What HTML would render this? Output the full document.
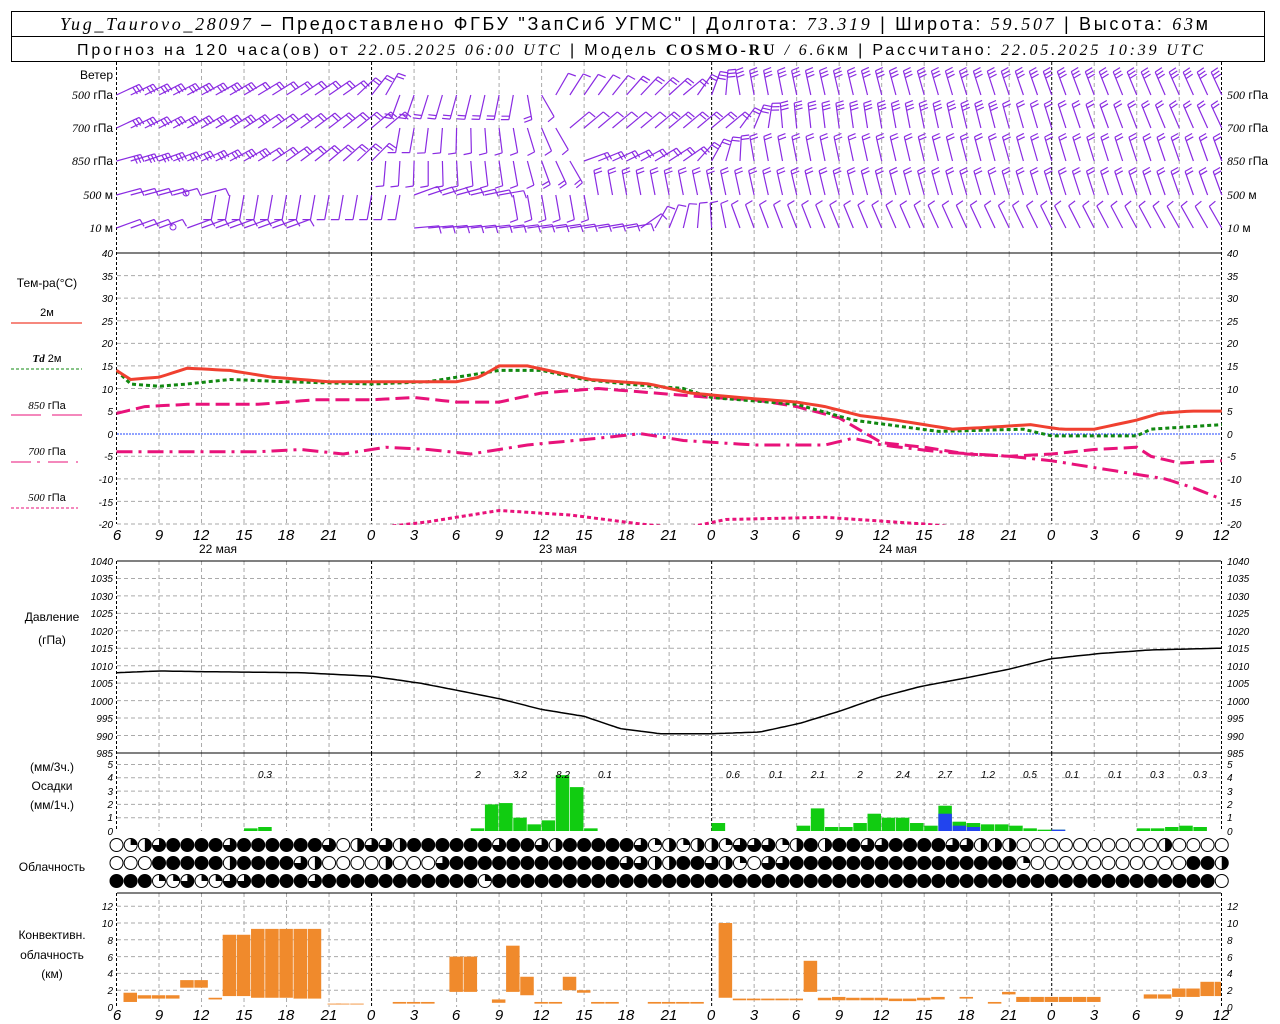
<!DOCTYPE html>
<html><head><meta charset="utf-8"><style>
html,body{margin:0;padding:0;background:#fff;width:1280px;height:1024px;overflow:hidden}
svg{display:block}
text{font-family:"Liberation Sans",sans-serif;fill:#000}
.it{font-family:"Liberation Serif",serif;font-style:italic}
.ax{font-family:"Liberation Sans",sans-serif;font-style:italic;font-size:10px}
.lb{font-size:12px}
.xl{font-family:"Liberation Sans",sans-serif;font-style:italic;font-size:15px}
</style></head><body>
<svg id="s" width="1280" height="1024" viewBox="0 0 1280 1024" xmlns="http://www.w3.org/2000/svg">
<defs><clipPath id="tc"><rect x="116" y="253" width="1106" height="272"/></clipPath></defs>
<rect x="11.5" y="11.5" width="1253" height="50" fill="none" stroke="#000"/>
<line x1="11" y1="36.5" x2="1265" y2="36.5" stroke="#000"/>
<text x="60" y="30" font-size="18" textLength="1148" lengthAdjust="spacing"><tspan class="it">Yug_Taurovo_28097</tspan> – Предоставлено ФГБУ "ЗапСиб УГМС" | Долгота: <tspan class="it">73.319</tspan> | Широта: <tspan class="it">59.507</tspan> | Высота: <tspan class="it">63</tspan>м</text>
<text x="77" y="55" font-size="16" textLength="1126" lengthAdjust="spacing">Прогноз на 120 часа(ов) от <tspan class="it">22.05.2025 06:00 UTC</tspan>  | Модель <tspan font-family="Liberation Serif" font-weight="bold">COSMO-RU</tspan> <tspan class="it">/ 6.6</tspan>км | Рассчитано: <tspan class="it">22.05.2025 10:39 UTC</tspan></text>
<g id="g"></g>
<g class="lb" text-anchor="end" font-size="11">
<text x="113" y="79">Ветер</text>
<text x="113" y="99"><tspan class="it">500</tspan> гПа</text>
<text x="113" y="132"><tspan class="it">700</tspan> гПа</text>
<text x="113" y="165"><tspan class="it">850</tspan> гПа</text>
<text x="113" y="199"><tspan class="it">500</tspan> м</text>
<text x="113" y="232"><tspan class="it">10</tspan> м</text>
</g>
<g class="lb" font-size="11">
<text x="1227" y="99"><tspan class="it">500</tspan> гПа</text>
<text x="1227" y="132"><tspan class="it">700</tspan> гПа</text>
<text x="1227" y="165"><tspan class="it">850</tspan> гПа</text>
<text x="1227" y="199"><tspan class="it">500</tspan> м</text>
<text x="1227" y="232"><tspan class="it">10</tspan> м</text>
</g>
<g text-anchor="middle" font-size="12">
<text x="47" y="287">Тем-ра(°С)</text>
<text x="47" y="316" font-size="11">2м</text>
<text x="47" y="362" font-size="11"><tspan class="it" font-weight="bold">Td</tspan>  2м</text>
<text x="47" y="409" font-size="11"><tspan class="it">850</tspan> гПа</text>
<text x="47" y="455" font-size="11"><tspan class="it">700</tspan> гПа</text>
<text x="47" y="501" font-size="11"><tspan class="it">500</tspan> гПа</text>
<text x="52" y="621">Давление</text>
<text x="52" y="644">(гПа)</text>
<text x="52" y="771">(мм/3ч.)</text>
<text x="52" y="790">Осадки</text>
<text x="52" y="809">(мм/1ч.)</text>
<text x="52" y="871">Облачность</text>
<text x="52" y="939">Конвективн.</text>
<text x="52" y="959">облачность</text>
<text x="52" y="978">(км)</text>
</g>
<line x1="11" y1="323" x2="82" y2="323" stroke="#f04030" stroke-width="1.2"/>
<line x1="11" y1="369" x2="82" y2="369" stroke="#118811" stroke-dasharray="3,2"/>
<line x1="11" y1="415" x2="41" y2="415" stroke="#e8127a"/><line x1="52" y1="415" x2="82" y2="415" stroke="#e8127a"/>
<path d="M11 462h20M37 462h3M48 462h20M76 462h2" stroke="#e8127a"/>
<line x1="11" y1="508" x2="78" y2="508" stroke="#e8127a" stroke-dasharray="3,2"/>
<g class="ax" text-anchor="end">
<text x="113" y="257">40</text><text x="113" y="302">30</text><text x="113" y="280">35</text><text x="113" y="325">25</text><text x="113" y="347">20</text><text x="113" y="370">15</text><text x="113" y="393">10</text><text x="113" y="415">5</text><text x="113" y="438">0</text><text x="113" y="460">-5</text><text x="113" y="483">-10</text><text x="113" y="506">-15</text><text x="113" y="528">-20</text>
<text x="113" y="565">1040</text><text x="113" y="582">1035</text><text x="113" y="600">1030</text><text x="113" y="617">1025</text><text x="113" y="635">1020</text><text x="113" y="652">1015</text><text x="113" y="670">1010</text><text x="113" y="687">1005</text><text x="113" y="705">1000</text><text x="113" y="722">995</text><text x="113" y="740">990</text><text x="113" y="757">985</text>
<text x="113" y="768">5</text><text x="113" y="781">4</text><text x="113" y="795">3</text><text x="113" y="808">2</text><text x="113" y="821">1</text><text x="113" y="835">0</text>
<text x="113" y="910">12</text><text x="113" y="927">10</text><text x="113" y="944">8</text><text x="113" y="961">6</text><text x="113" y="977">4</text><text x="113" y="994">2</text><text x="113" y="1011">0</text>
</g>
<g class="ax">
<text x="1227" y="257">40</text><text x="1227" y="280">35</text><text x="1227" y="302">30</text><text x="1227" y="325">25</text><text x="1227" y="347">20</text><text x="1227" y="370">15</text><text x="1227" y="393">10</text><text x="1227" y="415">5</text><text x="1227" y="438">0</text><text x="1227" y="460">-5</text><text x="1227" y="483">-10</text><text x="1227" y="506">-15</text><text x="1227" y="528">-20</text>
<text x="1227" y="565">1040</text><text x="1227" y="582">1035</text><text x="1227" y="600">1030</text><text x="1227" y="617">1025</text><text x="1227" y="635">1020</text><text x="1227" y="652">1015</text><text x="1227" y="670">1010</text><text x="1227" y="687">1005</text><text x="1227" y="705">1000</text><text x="1227" y="722">995</text><text x="1227" y="740">990</text><text x="1227" y="757">985</text>
<text x="1227" y="768">5</text><text x="1227" y="781">4</text><text x="1227" y="795">3</text><text x="1227" y="808">2</text><text x="1227" y="821">1</text><text x="1227" y="835">0</text>
<text x="1227" y="910">12</text><text x="1227" y="927">10</text><text x="1227" y="944">8</text><text x="1227" y="961">6</text><text x="1227" y="977">4</text><text x="1227" y="994">2</text><text x="1227" y="1011">0</text>
</g>
<g class="xl" text-anchor="middle">
<text x="117" y="540">6</text><text x="159" y="540">9</text><text x="201" y="540">12</text><text x="244" y="540">15</text><text x="286" y="540">18</text><text x="329" y="540">21</text><text x="371" y="540">0</text><text x="414" y="540">3</text><text x="456" y="540">6</text><text x="499" y="540">9</text><text x="541" y="540">12</text><text x="584" y="540">15</text><text x="626" y="540">18</text><text x="669" y="540">21</text><text x="711" y="540">0</text><text x="754" y="540">3</text><text x="796" y="540">6</text><text x="839" y="540">9</text><text x="881" y="540">12</text><text x="924" y="540">15</text><text x="966" y="540">18</text><text x="1009" y="540">21</text><text x="1051" y="540">0</text><text x="1094" y="540">3</text><text x="1136" y="540">6</text><text x="1179" y="540">9</text><text x="1221" y="540">12</text>
<text x="117" y="1020">6</text><text x="159" y="1020">9</text><text x="201" y="1020">12</text><text x="244" y="1020">15</text><text x="286" y="1020">18</text><text x="329" y="1020">21</text><text x="371" y="1020">0</text><text x="414" y="1020">3</text><text x="456" y="1020">6</text><text x="499" y="1020">9</text><text x="541" y="1020">12</text><text x="584" y="1020">15</text><text x="626" y="1020">18</text><text x="669" y="1020">21</text><text x="711" y="1020">0</text><text x="754" y="1020">3</text><text x="796" y="1020">6</text><text x="839" y="1020">9</text><text x="881" y="1020">12</text><text x="924" y="1020">15</text><text x="966" y="1020">18</text><text x="1009" y="1020">21</text><text x="1051" y="1020">0</text><text x="1094" y="1020">3</text><text x="1136" y="1020">6</text><text x="1179" y="1020">9</text><text x="1221" y="1020">12</text>
</g>
<g font-size="12" text-anchor="middle"><text x="218" y="553">22 мая</text><text x="558" y="553">23 мая</text><text x="898" y="553">24 мая</text></g>
<g class="ax" font-size="13" text-anchor="middle">
<text x="265" y="778">0.3</text><text x="478" y="778">2</text><text x="520" y="778">3.2</text><text x="563" y="778">8.2</text><text x="605" y="778">0.1</text><text x="733" y="778">0.6</text><text x="776" y="778">0.1</text><text x="818" y="778">2.1</text><text x="860" y="778">2</text><text x="903" y="778">2.4</text><text x="945" y="778">2.7</text><text x="988" y="778">1.2</text><text x="1030" y="778">0.5</text><text x="1072" y="778">0.1</text><text x="1115" y="778">0.1</text><text x="1157" y="778">0.3</text><text x="1200" y="778">0.3</text>
</g>
</svg>
<script>
var NS="http://www.w3.org/2000/svg",G=document.getElementById("g");
function el(t,a,p){var e=document.createElementNS(NS,t);for(var k in a)e.setAttribute(k,a[k]);(p||G).appendChild(e);return e;}
function X(h){return 116.5+h*14.17;}
function interp(kf,h){for(var i=0;i<kf.length-1;i++){if(h<=kf[i+1][0]){var a=kf[i],b=kf[i+1],f=(h-a[0])/(b[0]-a[0]);return a[1]+(b[1]-a[1])*f;}}return kf[kf.length-1][1];}
function ainterp(kf,h){for(var i=0;i<kf.length-1;i++){if(h<=kf[i+1][0]){var a=kf[i],b=kf[i+1],f=(h-a[0])/(b[0]-a[0]);if(Math.abs(b[1]-a[1])>90)return f<0.5?a[1]:b[1];return a[1]+(b[1]-a[1])*f;}}return kf[kf.length-1][1];}
function pts(kf,fy,step){var s="";for(var h=kf[0][0];h<=kf[kf.length-1][0]+0.001;h+=step||0.5){s+=X(h).toFixed(1)+","+fy(interp(kf,h)).toFixed(1)+" ";}return s;}
var gray={stroke:"#aaa","stroke-dasharray":"4,3","stroke-width":1};
var panels=[[62,253],[253,524],[561,753],[753,831],[893,1007]];
panels.forEach(function(p){for(var h=3;h<78;h+=3){var mid=(h==18||h==42||h==66);el("line",{x1:X(h),x2:X(h),y1:p[0],y2:p[1],stroke:mid?"#000":"#aaa","stroke-dasharray":mid?"3,2":"4,3"});}});
function hgrid(y){el("line",Object.assign({x1:117,x2:1221,y1:y,y2:y},gray));}
for(var t=35;t>=-20;t-=5)if(t!=0)hgrid(253+(40-t)*4.517);
for(var p=1035;p>=990;p-=5)hgrid(561+(1040-p)*3.49);
for(var m=1;m<=5;m++)hgrid(831-m*13.3);
for(var k=2;k<=12;k+=2)hgrid(1007-k*8.4);
el("line",{x1:117,x2:1221,y1:434,y2:434,stroke:"#2244ff","stroke-dasharray":"2,1"});
[253,561,753,893].forEach(function(y){el("line",{x1:117,x2:1221,y1:y,y2:y,stroke:"#000"});});
[[62,524],[561,831],[893,1007]].forEach(function(p){[116.5,1221.5].forEach(function(x){el("line",{x1:x,x2:x,y1:p[0],y2:p[1],stroke:"#000","stroke-dasharray":"3,2"});});});
var TY=function(t){return 253+(40-t)*4.517;};
var tg=el("g",{"clip-path":"url(#tc)",fill:"none"});
function curve(kf,st){var a={points:pts(kf,TY),fill:"none"};for(var k in st)a[k]=st[k];el("polyline",a,tg);}
curve([[0,-4],[10,-4],[13,-3.5],[16,-4.5],[19,-3],[22,-3.5],[25,-4.5],[29,-2.5],[34,-1],[37,0],[40,-1.5],[45,-2.5],[50,-2.5],[52,-1],[54,-2.5],[58,-4],[63,-5],[66,-6],[70,-8],[72,-9],[74,-10],[76,-12],[78,-14.5]],{stroke:"#e8127a","stroke-width":3,"stroke-dasharray":"16,6,3,6"});
curve([[0,4.5],[2,6],[5,6.5],[10,6.5],[14,7.5],[18,7.5],[21,8],[24,7],[27,7],[30,9],[34,10],[38,9],[42,8],[45,7.5],[48,6],[51,3.5],[54,-2],[57,-3],[60,-4.5],[63,-5],[66,-4.5],[69,-3.5],[72,-3],[73,-5],[75,-6.5],[78,-6]],{stroke:"#e8127a","stroke-width":3,"stroke-dasharray":"14,6"});
curve([[18,-21],[22,-19.5],[27,-17],[32,-18],[37,-20],[40,-21],[43,-19],[50,-18.5],[57,-20],[60,-21]],{stroke:"#e8127a","stroke-width":3,"stroke-dasharray":"4,3"});
curve([[0,14],[1,11],[3,10.5],[5,11],[8,12],[12,11.5],[18,11],[22,11.5],[25,13],[27,14],[30,14],[33,12],[36,11],[40,10],[42,8],[48,6.5],[52,3],[58,0.5],[64,1],[66,-0.5],[72,-0.5],[73,1],[78,2]],{stroke:"#118811","stroke-width":3,"stroke-dasharray":"4,3"});
curve([[0,14],[1,12],[3,12.5],[5,14.5],[8,14],[11,12.5],[15,11.5],[21,11.5],[24,11.5],[25.6,12.5],[27,15],[29,15],[33.4,12],[37.6,11],[40.5,9],[44,8],[48,7],[50,6],[52.5,4],[55,3],[59,1],[62,1.5],[64.5,2],[66.6,1],[69,1],[72,3],[73.6,4.5],[75.8,5],[78,5]],{stroke:"#f04030","stroke-width":3});
var pk=[[117,1008],[160,1008.5],[200,1008.3],[300,1008],[371,1007],[420,1005],[456,1003],[500,1000.5],[541,997.5],[584,995.5],[620,992],[660,990.5],[711,990.5],[760,991],[800,993.5],[840,997],[880,1001],[920,1004],[966,1006.5],[1009,1009],[1051,1012],[1100,1013.5],[1150,1014.5],[1221,1015]];
var ps="";for(var x=117;x<=1221;x+=4){ps+=x+","+(561+(1040-interp(pk,x))*3.49).toFixed(1)+" ";}
el("polyline",{points:ps,fill:"none",stroke:"#000","stroke-width":1.5});
var pr={9:.2,10:.3,25:.2,26:2,27:2.1,28:1,29:.5,30:.8,31:4.2,32:3.3,33:.2,42:.6,48:.4,49:1.7,50:.3,51:.3,52:.6,53:1.3,54:1,55:1,56:.6,57:.4,58:1.9,59:.7,60:.6,61:.5,62:.5,63:.4,64:.2,65:.1,66:.1,72:.2,73:.2,74:.3,75:.4,76:.3};
var bl={58:1.3,59:.4,60:.3,66:.1};
for(var h in pr){h=+h;var v=pr[h];el("rect",{x:X(h),y:831-v*13.3,width:13.5,height:v*13.3,fill:"#11cc11"});if(bl[h])el("rect",{x:X(h),y:831-bl[h]*13.3,width:13.5,height:bl[h]*13.3,fill:"#2244ee"});}
var rows=[
"012344443444444302332444444344324444431"+"2122133312424433444433222000000000020000",
"000444442444432000020003444444444444332"+"2443210334444444444444444100000000000442",""];
var r3="";for(var i=0;i<79;i++){var c="4";if(i==3||i==4||i==6||i==7||i==26)c="1";if(i==5||i==8||i==9||i==14)c="3";if(i==78)c="0";r3+=c;}rows[2]=r3;
var cy=[845,863,881];
rows.forEach(function(r,ri){for(var i=0;i<79&&i<r.length;i++){var x=X(i),y=cy[ri],R=6.5,c=+r[i];
 el("circle",{cx:x,cy:y,r:R,fill:c==4?"#000":"#fff",stroke:"#000"});
 if(c>0&&c<4){var a=c*Math.PI/2;var ex=x+R*Math.sin(a),ey=y-R*Math.cos(a);el("path",{d:"M"+x+" "+y+"L"+x+" "+(y-R)+"A"+R+" "+R+" 0 "+(c>2?1:0)+" 1 "+ex.toFixed(2)+" "+ey.toFixed(2)+"Z",fill:"#000"});}}});
var cv=[[0,.6,1.7],[1,1,1.4],[2,1,1.4],[3,1,1.4],[4,2.3,3.2],[5,2.3,3.2],[6,.9,1.1],[7,1.3,8.6],[8,1.3,8.6],[9,1.1,9.3],[10,1.1,9.3],[11,1.1,9.3],[12,1,9.3],[13,1,9.3],[14.4,.3,.4],[15,.3,.4],[16,.3,.4],[19,.4,.6],[20,.4,.6],[21,.4,.6],[23,1.8,6],[24,1.8,6],[26,.5,.9],[27,1.8,7.3],[28,1.4,3.6],[29,.4,.6],[30,.4,.6],[31,2,3.6],[32,1.7,2],[33,.4,.6],[34,.4,.6],[37,.4,.6],[38,.4,.6],[39,.4,.6],[40,.4,.6],[42,1.1,10],[43,.8,1],[44,.8,1],[45,.8,1],[46,.8,1],[47,.8,1],[48,1.8,5.5],[49,.8,1.1],[50,.8,1.2],[51,.8,1.1],[52,.8,1.1],[53,.8,1.1],[54,.7,1],[55,.7,1],[56,.8,1.1],[57,.9,1.2],[59,1,1.2],[61,.4,.6],[62,1.5,1.8],[63,.6,1.2],[64,.6,1.2],[65,.6,1.2],[66,.6,1.2],[67,.6,1.2],[68,.6,1.2],[72,1,1.5],[73,1,1.5],[74,1.2,2.2],[75,1.2,2.2],[76,1.3,3],[77,1.3,3]];
cv.forEach(function(b){var x=X(b[0])+7;el("rect",{x:x,y:1007-b[2]*8.4,width:Math.min(13.5,1221-x),height:(b[2]-b[1])*8.4,fill:"#f08a2c"});});
var wr=[
[95,[[0,-25,3],[16,-35,2],[19,-60,2],[20,110,2],[28,100,2],[30,60,1],[31,-60,1],[40,-40,2],[44,-100,3],[78,-115,3]]],
[128,[[0,-25,3],[18,-40,2],[21,100,1],[28,80,1],[31,60,1],[32,-40,1],[43,-40,2],[47,-95,3],[78,-115,2]]],
[161,[[0,-15,3],[18,-45,2],[19,95,1],[28,80,1],[32,60,2],[33,-20,2],[40,-35,2],[45,-100,2],[78,-110,2]]],
[195,[[0,-15,1],[4,-15,1],[10,100,1],[20,100,1],[21,-20,1],[27,-10,1],[28,80,1],[33,80,1],[34,-100,2],[78,-110,2]]],
[228,[[0,-20,1],[12,-20,1],[21,-5,1],[36,-10,1],[38,-60,1],[44,-110,1],[78,-120,1]]]];
var wg=el("g",{stroke:"#8a2be2","stroke-width":1.2,fill:"none"});
wr.forEach(function(r){var y=r[0],kf=r[1];for(var h=0;h<=78;h++){if(y==195&&h==5)continue;if(y==228&&(h==4||(h>=13&&h<=20)))continue;
 var th=ainterp(kf.map(function(k){return[k[0],k[1]]}),h)*Math.PI/180,n=Math.round(interp(kf.map(function(k){return[k[0],k[2]]}),h));
 var L=25,x0=X(h),tx=x0+L*Math.cos(th),ty=y+L*Math.sin(th),d="M"+x0.toFixed(1)+" "+y+"L"+tx.toFixed(1)+" "+ty.toFixed(1);
 var fa=th+80*Math.PI/180;for(var j=0;j<n;j++){var px=tx-j*3.5*Math.cos(th),py=ty-j*3.5*Math.sin(th);d+="M"+px.toFixed(1)+" "+py.toFixed(1)+"l"+(8*Math.cos(fa)).toFixed(1)+" "+(8*Math.sin(fa)).toFixed(1);}
 el("path",{d:d},wg);}});
el("circle",{cx:186,cy:193,r:3,fill:"none",stroke:"#8a2be2"});el("circle",{cx:173,cy:227,r:3,fill:"none",stroke:"#8a2be2"});
</script>
</body></html>
